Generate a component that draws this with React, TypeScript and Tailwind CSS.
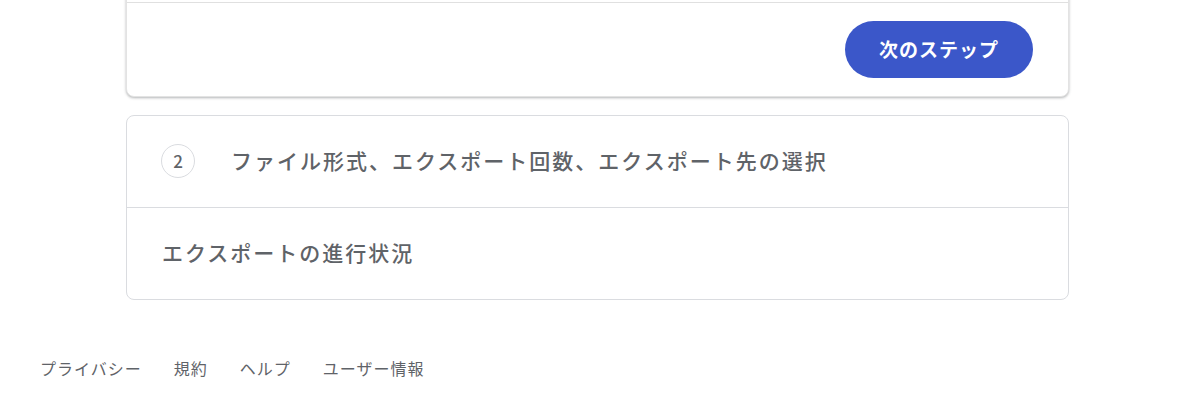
import React from "react";

export default function App() {
  const font = { fontFamily: '"Noto Sans CJK JP", "Noto Sans", sans-serif' };
  return (
    <div className="w-[1200px] h-[402px] bg-white overflow-hidden" style={font}>
      <div className="pl-[126px] w-[1069px]">
        {/* Top card (continues above viewport) */}
        <div className="-mt-[20px] bg-white rounded-[8px] shadow-[0_1px_3px_rgba(60,64,67,0.25),0_1px_2px_rgba(60,64,67,0.15)] border border-[#e3e3e3]">
          <div className="h-[22px] border-b border-[#e0e0e0]" />
          <div className="flex justify-end pt-[18px] pb-[18px] pr-[35px]">
            <button className="w-[188px] h-[57px] rounded-full bg-[#3b57c9] text-white text-[19px] font-bold tracking-[1px] flex items-center justify-center">
              次のステップ
            </button>
          </div>
        </div>

        {/* Second card */}
        <div className="mt-[18px] bg-white rounded-[8px] border border-[#dadce0]">
          <div className="h-[92px] flex items-center pl-[34px] pb-[2px] border-b border-[#dadce0]">
            <div className="w-[34px] h-[34px] rounded-full border border-[#dadce0] flex items-center justify-center text-[17px] font-medium text-[#5f6368]">
              2
            </div>
            <div className="ml-[36px] text-[21px] font-medium tracking-[2px] text-[#5f6368]">
              ファイル形式、エクスポート回数、エクスポート先の選択
            </div>
          </div>
          <div className="h-[91px] flex items-center pl-[35px] pb-[2px]">
            <div className="text-[21px] font-medium tracking-[2px] text-[#5f6368]">
              エクスポートの進行状況
            </div>
          </div>
        </div>
      </div>

      {/* Footer */}
      <div className="mt-[56px] pl-[40px] flex gap-[32px] text-[16px] tracking-[1px] text-[#5f6368]">
        <span>プライバシー</span>
        <span>規約</span>
        <span>ヘルプ</span>
        <span>ユーザー情報</span>
      </div>
    </div>
  );
}
